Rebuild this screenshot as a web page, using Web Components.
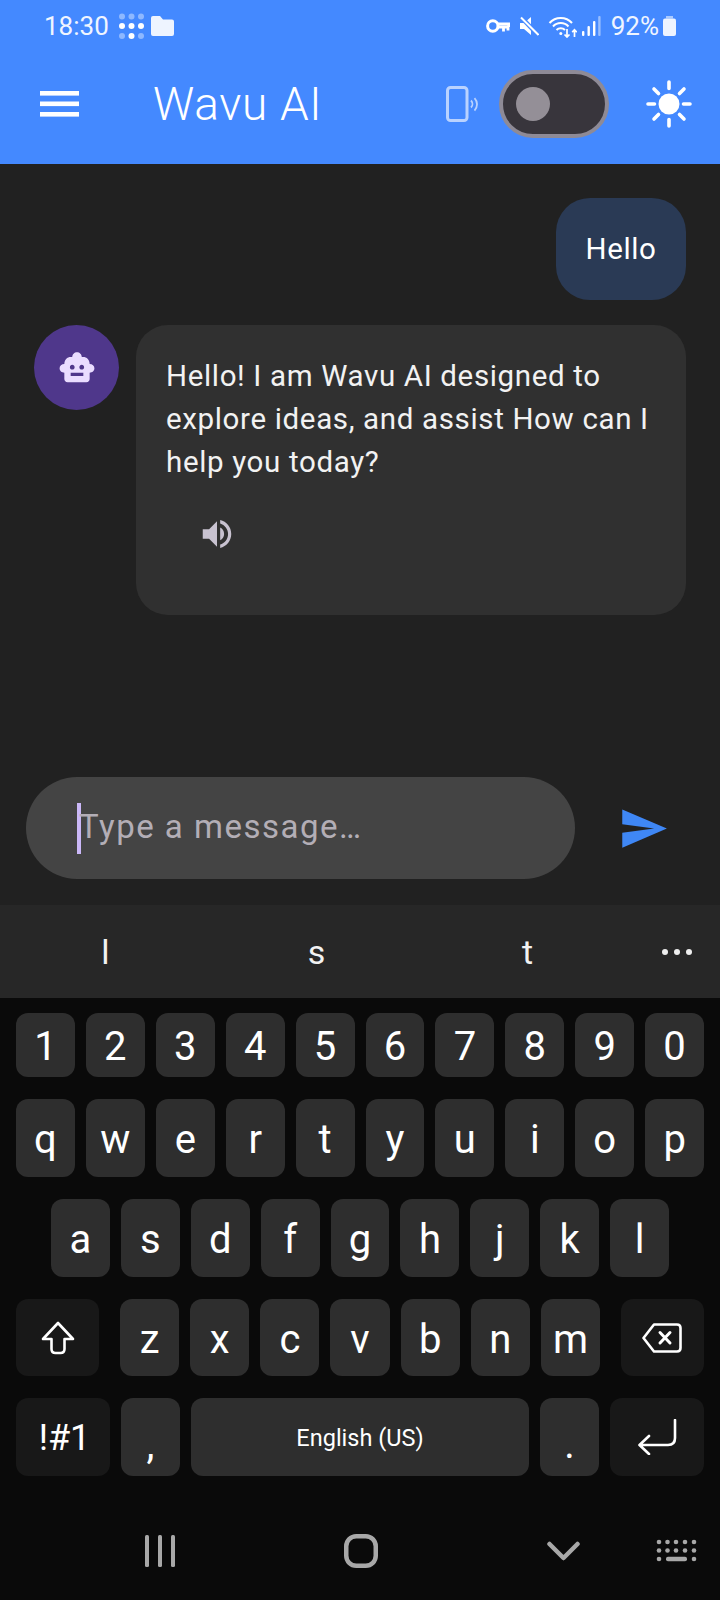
<!DOCTYPE html>
<html>
<head>
<meta charset="utf-8">
<title>Wavu AI</title>
<style>
    html, body { margin: 0; padding: 0; background: #212121; }
    body {
        width: 720px;
        height: 1600px;
        display: flex;
        flex-direction: column;
        overflow: hidden;
        font-family: Roboto, "Liberation Sans", sans-serif;
    }
</style>
</head>
<body>
<app-header></app-header>
<chat-view>
    <user-bubble>Hello</user-bubble>
    <bot-bubble>Hello! I am Wavu AI designed to explore ideas, and assist How can I help you today?</bot-bubble>
</chat-view>
<message-input placeholder="Type a message…"></message-input>
<suggestion-bar>
    <span>l</span><span>s</span><span>t</span>
</suggestion-bar>
<sam-keyboard>
    <kb-row>
        <kb-key>1</kb-key><kb-key>2</kb-key><kb-key>3</kb-key><kb-key>4</kb-key><kb-key>5</kb-key>
        <kb-key>6</kb-key><kb-key>7</kb-key><kb-key>8</kb-key><kb-key>9</kb-key><kb-key>0</kb-key>
    </kb-row>
    <kb-row style="height:78px">
        <kb-key>q</kb-key><kb-key>w</kb-key><kb-key>e</kb-key><kb-key>r</kb-key><kb-key>t</kb-key>
        <kb-key>y</kb-key><kb-key>u</kb-key><kb-key>i</kb-key><kb-key>o</kb-key><kb-key>p</kb-key>
    </kb-row>
    <kb-row style="height:78px;padding:0 51px">
        <kb-key>a</kb-key><kb-key>s</kb-key><kb-key>d</kb-key><kb-key>f</kb-key><kb-key>g</kb-key>
        <kb-key>h</kb-key><kb-key>j</kb-key><kb-key>k</kb-key><kb-key>l</kb-key>
    </kb-row>
    <kb-row style="height:77px">
        <kb-key mod style="flex:0 0 83px;margin-right:10px">
            <svg width="34" height="34" viewBox="0 0 34 34" fill="none" stroke="#fff" stroke-width="2.6" stroke-linejoin="round"><path d="M17 2 L2 18 H10.5 V28 Q10.5 32 14.5 32 H19.5 Q23.5 32 23.5 28 V18 H32 Z"/></svg>
        </kb-key>
        <kb-key>z</kb-key><kb-key>x</kb-key><kb-key>c</kb-key><kb-key>v</kb-key>
        <kb-key>b</kb-key><kb-key>n</kb-key><kb-key>m</kb-key>
        <kb-key mod style="flex:0 0 83px;margin-left:10px">
            <svg width="40" height="30" viewBox="0 0 40 30" fill="none" stroke="#fff" stroke-width="2.6" stroke-linejoin="round" stroke-linecap="round"><path d="M12 1.5 H35 Q38.5 1.5 38.5 5 V25 Q38.5 28.5 35 28.5 H12 L1.5 15 Z"/><path d="M18 9.5 L28 20 M28 9.5 L18 20" stroke-width="3"/></svg>
        </kb-key>
    </kb-row>
    <kb-row style="height:78px">
        <kb-key mod style="flex:0 0 94px;font-size:36px;padding:1px 0 0 3px">!#1</kb-key>
        <kb-key low style="flex:0 0 59px">,</kb-key>
        <kb-key style="flex:1 1 0;font-size:23.5px;padding-top:1px">English (US)</kb-key>
        <kb-key low style="flex:0 0 59px">.</kb-key>
        <kb-key mod style="flex:0 0 94px">
            <svg width="40" height="36" viewBox="0 0 40 36" fill="none" stroke="#fff" stroke-width="2.6" stroke-linejoin="round" stroke-linecap="round"><path d="M38 1 V19 Q38 26 31 26 H3 M12 17 L2.5 26 L12 35"/></svg>
        </kb-key>
    </kb-row>
    <nav-bar></nav-bar>
</sam-keyboard>

<script>
class StatusBar extends HTMLElement {
    constructor() {
        super();
        this.attachShadow({ mode: 'open' });
        this.shadowRoot.innerHTML = `
<style>
    :host {
        display: flex;
        align-items: center;
        height: 52px;
        padding: 0 44px 0 44px;
        color: #f0f5ff;
        font: 400 26px Roboto, sans-serif;
    }
    svg { display: block; flex: none; }
    .right { margin-left: auto; display: flex; align-items: center; }
</style>
<span>18:30</span>
<svg style="margin-left:9px" width="26" height="26" viewBox="0 0 26 26">
    <g fill="#fff" fill-opacity=".4">
        <circle cx="4" cy="3.5" r="3"/><circle cx="13.5" cy="3.5" r="3"/><circle cx="23" cy="3.5" r="3"/>
        <circle cx="4" cy="23" r="3"/><circle cx="23" cy="23" r="3"/>
    </g>
    <g fill="#fff">
        <circle cx="4" cy="13" r="3"/><circle cx="13.5" cy="13" r="3"/><circle cx="23" cy="13" r="3"/>
        <circle cx="13.5" cy="23" r="3"/>
    </g>
</svg>
<svg style="margin-left:7px" width="23" height="20" viewBox="0 0 23 20">
    <path fill="#eef4ff" d="M0 2 Q0 0 2 0 H9 L12 3.5 H21 Q23 3.5 23 5.5 V18 Q23 20 21 20 H2 Q0 20 0 18 Z"/>
</svg>
<div class="right">
    <svg width="24" height="16" viewBox="0 0 24 16" fill="none" stroke="#fff">
        <circle cx="6.8" cy="8" r="5.2" stroke-width="3"/>
        <path d="M12 6 H22.7 V9 M13 9.2 H22.7 M17.5 9 V13.5 M22 9 V12.5" stroke-width="2.8"/>
    </svg>
    <svg style="margin-left:9px" width="20" height="20" viewBox="0 0 20 20">
        <path fill="#fff" d="M1 7 H5 L12 1 V19 L5 13 H1 Z"/>
        <path d="M1 0 L20 20" stroke="#4489ff" stroke-width="4.5"/>
        <path d="M2 1.5 L19.5 19" stroke="#fff" stroke-width="2"/>
    </svg>
    <svg style="margin-left:9px" width="29" height="24" viewBox="0 0 29 24" fill="none" stroke="#fff">
        <path d="M1.5 9 A15 15 0 0 1 24 9" stroke-width="2"/>
        <path d="M5 12.5 A10.5 10.5 0 0 1 20.5 12.5" stroke-width="2"/>
        <path d="M8.5 16 A6 6 0 0 1 17 16" stroke-width="2"/>
        <circle cx="12.8" cy="19.5" r="1.5" fill="#fff" stroke="none"/>
        <path d="M19 15 V23 M16.5 20.5 L19 23 L21.5 20.5 M26.5 23 V16 M24.2 18.2 L26.5 15.8 L28.8 18.2" stroke-width="1.7"/>
    </svg>
    <svg style="margin-left:5px" width="19" height="20" viewBox="0 0 19 20">
        <rect x="0" y="15" width="2.4" height="5" rx="1" fill="#fff"/>
        <rect x="5.5" y="10" width="2.4" height="10" rx="1" fill="#fff"/>
        <rect x="11" y="5" width="2.4" height="15" rx="1" fill="#fff"/>
        <rect x="16.2" y="0" width="2.4" height="20" rx="1" fill="#fff" fill-opacity=".45"/>
    </svg>
    <span style="margin-left:10px">92%</span>
    <svg style="margin-left:4px" width="13" height="20" viewBox="0 0 13 20">
        <path fill="#fff" fill-opacity=".55" d="M3 0 H10 V2.5 H3 Z"/>
        <rect y="2.5" width="13" height="17.5" rx="2" fill="#eef4ff"/>
    </svg>
</div>
        `;
    }
}
customElements.define('status-bar', StatusBar);

class AppHeader extends HTMLElement {
    constructor() {
        super();
        this.attachShadow({ mode: 'open' });
        this.shadowRoot.innerHTML = `
<style>
    :host {
        display: block;
        flex: none;
        height: 164px;
        background: #4489ff;
        color: #fff;
    }
    .toolbar {
        display: flex;
        align-items: center;
        height: 104px;
        padding-left: 40px;
    }
    .title {
        margin-left: 74px;
        font: 300 46px Roboto, sans-serif;
        letter-spacing: .7px;
    }
    .actions { margin-left: auto; display: flex; align-items: center; padding-right: 28px; }
    svg { display: block; flex: none; }
    .switch {
        box-sizing: border-box;
        width: 110px;
        height: 68px;
        margin-left: 20px;
        padding-left: 13px;
        display: flex;
        align-items: center;
        border: 4px solid #8e8a96;
        border-radius: 34px;
        background: #38353c;
    }
    .thumb { width: 34px; height: 34px; border-radius: 50%; background: #948f97; }
</style>
<status-bar></status-bar>
<div class="toolbar">
    <svg width="39" height="26" viewBox="0 0 39 26" fill="#fff">
        <rect y="0" width="39" height="4.6"/><rect y="10.5" width="39" height="4.6"/><rect y="21" width="39" height="4.6"/>
    </svg>
    <span class="title">Wavu AI</span>
    <div class="actions">
        <svg width="33" height="36" viewBox="0 0 33 36" fill="none" stroke="#b9d2ff">
            <rect x="1.5" y="1.5" width="19.5" height="33" rx="3" stroke-width="3"/>
            <path d="M25 14.5 A5 5 0 0 1 25 21.5" stroke-width="1.8"/>
            <path d="M28.5 12 A9 9 0 0 1 28.5 24.5" stroke-width="1.8"/>
        </svg>
        <div class="switch"><div class="thumb"></div></div>
        <svg style="margin-left:37px" width="46" height="48" viewBox="0 0 46 48" fill="#fff" stroke="#fff" stroke-linecap="round">
            <circle cx="23" cy="24" r="10.5" stroke="none"/>
            <path stroke-width="3.6" d="M23 2 V8.5 M23 39.5 V46 M2 24 H8.5 M37.5 24 H44 M8 9 L12.5 13.5 M33.5 34.5 L38 39 M38 9 L33.5 13.5 M12.5 34.5 L8 39"/>
        </svg>
    </div>
</div>
        `;
    }
}
customElements.define('app-header', AppHeader);

class ChatView extends HTMLElement {
    constructor() {
        super();
        this.attachShadow({ mode: 'open' });
        this.shadowRoot.innerHTML = `
<style>
    :host {
        display: flex;
        flex-direction: column;
        flex: 1 1 0;
        gap: 25px;
        padding: 34px 34px 0;
        min-height: 0;
    }
</style>
<slot></slot>
        `;
    }
}
customElements.define('chat-view', ChatView);

class UserBubble extends HTMLElement {
    constructor() {
        super();
        this.attachShadow({ mode: 'open' });
        this.shadowRoot.innerHTML = `
<style>
    :host {
        display: flex;
        align-items: center;
        justify-content: center;
        align-self: flex-end;
        box-sizing: border-box;
        width: 130px;
        height: 102px;
        border-radius: 34px;
        background: #2a3a55;
        color: #fff;
        font: 400 29.5px Roboto, sans-serif;
        letter-spacing: .65px;
    }
</style>
<slot></slot>
        `;
    }
}
customElements.define('user-bubble', UserBubble);

class BotBubble extends HTMLElement {
    constructor() {
        super();
        this.attachShadow({ mode: 'open' });
        this.shadowRoot.innerHTML = `
<style>
    :host { display: flex; gap: 17px; align-items: flex-start; }
    .avatar {
        flex: none;
        width: 85px;
        height: 85px;
        border-radius: 50%;
        background: #4f378b;
        display: flex;
        align-items: center;
        justify-content: center;
    }
    .bubble {
        flex: 1;
        box-sizing: border-box;
        height: 290px;
        padding: 30px 31px 0 30px;
        border-radius: 32px;
        background: #303030;
        color: #f2f2f2;
        font: 400 29.5px/43px Roboto, sans-serif;
        letter-spacing: .65px;
    }
    svg { display: block; }
    .speak { margin: 31px 0 0 32px; }
</style>
<div class="avatar">
    <svg width="38" height="38" viewBox="0 0 24 24" fill="#eaddff">
        <path d="M20 9.5c0-2.8-1.7-4.5-4.2-4.5H15c0-1.66-1.34-3-3-3S9 3.34 9 5h-.8C5.7 5 4 6.7 4 9.5 2.34 9.5 1 10.6 1 12.2S2.34 15 4 15v4c0 1.1.9 2 2 2h12c1.1 0 2-.9 2-2v-4c1.66 0 3-1.2 3-2.8s-1.34-2.7-3-2.7zM7.5 11.5c0-.83.67-1.5 1.5-1.5s1.5.67 1.5 1.5S9.83 13 9 13s-1.5-.67-1.5-1.5zM16 17H8v-2h8v2zm-1-4c-.83 0-1.5-.67-1.5-1.5S14.17 10 15 10s1.5.67 1.5 1.5S15.83 13 15 13z"/>
    </svg>
</div>
<div class="bubble">
    <slot></slot>
    <svg class="speak" width="38" height="38" viewBox="0 0 24 24" fill="#c8c2d0">
        <path d="M3 9v6h4l5 5V4L7 9H3zm13.5 3c0-1.77-1.02-3.29-2.5-4.03v8.05c1.48-.73 2.5-2.25 2.5-4.02zM14 3.23v2.06c2.89.86 5 3.54 5 6.71s-2.11 5.85-5 6.71v2.06c4.01-.91 7-4.49 7-8.77s-2.99-7.86-7-8.77z"/>
    </svg>
</div>
        `;
    }
}
customElements.define('bot-bubble', BotBubble);

class MessageInput extends HTMLElement {
    constructor() {
        super();
        this.attachShadow({ mode: 'open' });
        this.shadowRoot.innerHTML = `
<style>
    :host {
        display: flex;
        align-items: center;
        flex: none;
        padding: 0 50px 26px 26px;
    }
    .field {
        box-sizing: border-box;
        width: 549px;
        height: 102px;
        padding-left: 51px;
        display: flex;
        align-items: center;
        border-radius: 51px;
        background: #444444;
        color: #b3aeb6;
        font: 400 33px Roboto, sans-serif;
        letter-spacing: 1.5px;
    }
    .hint { padding-bottom: 4px; }
    .caret { flex: none; width: 4px; height: 51px; margin-right: -2px; background: #cbb8f8; }
    svg { display: block; margin-left: 43px; flex: none; }
</style>
<div class="field"><div class="caret"></div><span class="hint"></span></div>
<svg width="51" height="51" viewBox="0 0 24 24" fill="#3f87f5"><path d="M2.01 21L23 12 2.01 3 2 10l15 2-15 2z"/></svg>
        `;
        this.shadowRoot.querySelector('.hint').textContent = this.getAttribute('placeholder');
    }
}
customElements.define('message-input', MessageInput);

class SuggestionBar extends HTMLElement {
    constructor() {
        super();
        this.attachShadow({ mode: 'open' });
        this.shadowRoot.innerHTML = `
<style>
    :host {
        display: grid;
        grid-template-columns: 211px 211px 211px 1fr;
        align-items: center;
        justify-items: center;
        flex: none;
        height: 93px;
        background: #272727;
        color: #f2f2f2;
        font: 400 34px Roboto, sans-serif;
    }
    ::slotted(span) { display: block; }
    .more { display: flex; gap: 6px; padding-top: 1px; }
    .more i { width: 6px; height: 6px; border-radius: 50%; background: #eeeeee; }
</style>
<slot></slot>
<div class="more"><i></i><i></i><i></i></div>
        `;
    }
}
customElements.define('suggestion-bar', SuggestionBar);

class SamKeyboard extends HTMLElement {
    constructor() {
        super();
        this.attachShadow({ mode: 'open' });
        this.shadowRoot.innerHTML = `
<style>
    :host {
        display: flex;
        flex-direction: column;
        flex: none;
        box-sizing: border-box;
        height: 602px;
        padding-top: 15px;
        gap: 22px;
        background: #0a0a0a;
    }
</style>
<slot></slot>
        `;
    }
}
customElements.define('sam-keyboard', SamKeyboard);

class KbRow extends HTMLElement {
    constructor() {
        super();
        this.attachShadow({ mode: 'open' });
        this.shadowRoot.innerHTML = `
<style>
    :host {
        display: flex;
        height: 64px;
        padding: 0 16px;
        gap: 11px;
    }
</style>
<slot></slot>
        `;
    }
}
customElements.define('kb-row', KbRow);

class KbKey extends HTMLElement {
    constructor() {
        super();
        this.attachShadow({ mode: 'open' });
        this.shadowRoot.innerHTML = `
<style>
    :host {
        flex: 1 1 0;
        min-width: 0;
        box-sizing: border-box;
        display: flex;
        align-items: center;
        justify-content: center;
        padding-top: 3px;
        border-radius: 12px;
        background: #2e2e2e;
        color: #fff;
        font: 400 40px Roboto, sans-serif;
    }
    :host([mod]) { background: #181818; padding-top: 0; }
    :host([low]) { padding-top: 14px; }
</style>
<slot></slot>
        `;
    }
}
customElements.define('kb-key', KbKey);

class NavBar extends HTMLElement {
    constructor() {
        super();
        this.attachShadow({ mode: 'open' });
        this.shadowRoot.innerHTML = `
<style>
    :host {
        display: flex;
        align-items: center;
        height: 34px;
        margin-top: 36px;
        padding-left: 145px;
    }
    svg { display: block; flex: none; }
</style>
<svg width="30" height="32" viewBox="0 0 30 32" fill="#a8a8a8">
    <rect x="0" width="4" height="32" rx="1.5"/><rect x="13" width="4" height="32" rx="1.5"/><rect x="26" width="4" height="32" rx="1.5"/>
</svg>
<svg style="margin-left:169px" width="34" height="34" viewBox="0 0 34 34" fill="none" stroke="#a8a8a8" stroke-width="4.5">
    <rect x="2.25" y="2.25" width="29.5" height="29.5" rx="10"/>
</svg>
<svg style="margin-left:169px" width="33" height="20" viewBox="0 0 33 20" fill="none" stroke="#a8a8a8" stroke-width="4.5" stroke-linecap="round" stroke-linejoin="round">
    <path d="M2.5 3 L16.5 17 L30.5 3"/>
</svg>
<svg style="margin-left:76px" width="41" height="24" viewBox="0 0 41 24" fill="#a8a8a8">
    <circle cx="3" cy="3" r="2.3"/><circle cx="11.5" cy="3" r="2.3"/><circle cx="20" cy="3" r="2.3"/><circle cx="29" cy="3" r="2.3"/><circle cx="38" cy="3" r="2.3"/>
    <circle cx="3" cy="11.5" r="2.3"/><circle cx="11.5" cy="11.5" r="2.3"/><circle cx="20" cy="11.5" r="2.3"/><circle cx="29" cy="11.5" r="2.3"/><circle cx="38" cy="11.5" r="2.3"/>
    <circle cx="3" cy="20" r="2.3"/><rect x="10" y="17.8" width="21" height="4.4" rx="2"/><circle cx="38" cy="20" r="2.3"/>
</svg>
        `;
    }
}
customElements.define('nav-bar', NavBar);
</script>
</body>
</html>
